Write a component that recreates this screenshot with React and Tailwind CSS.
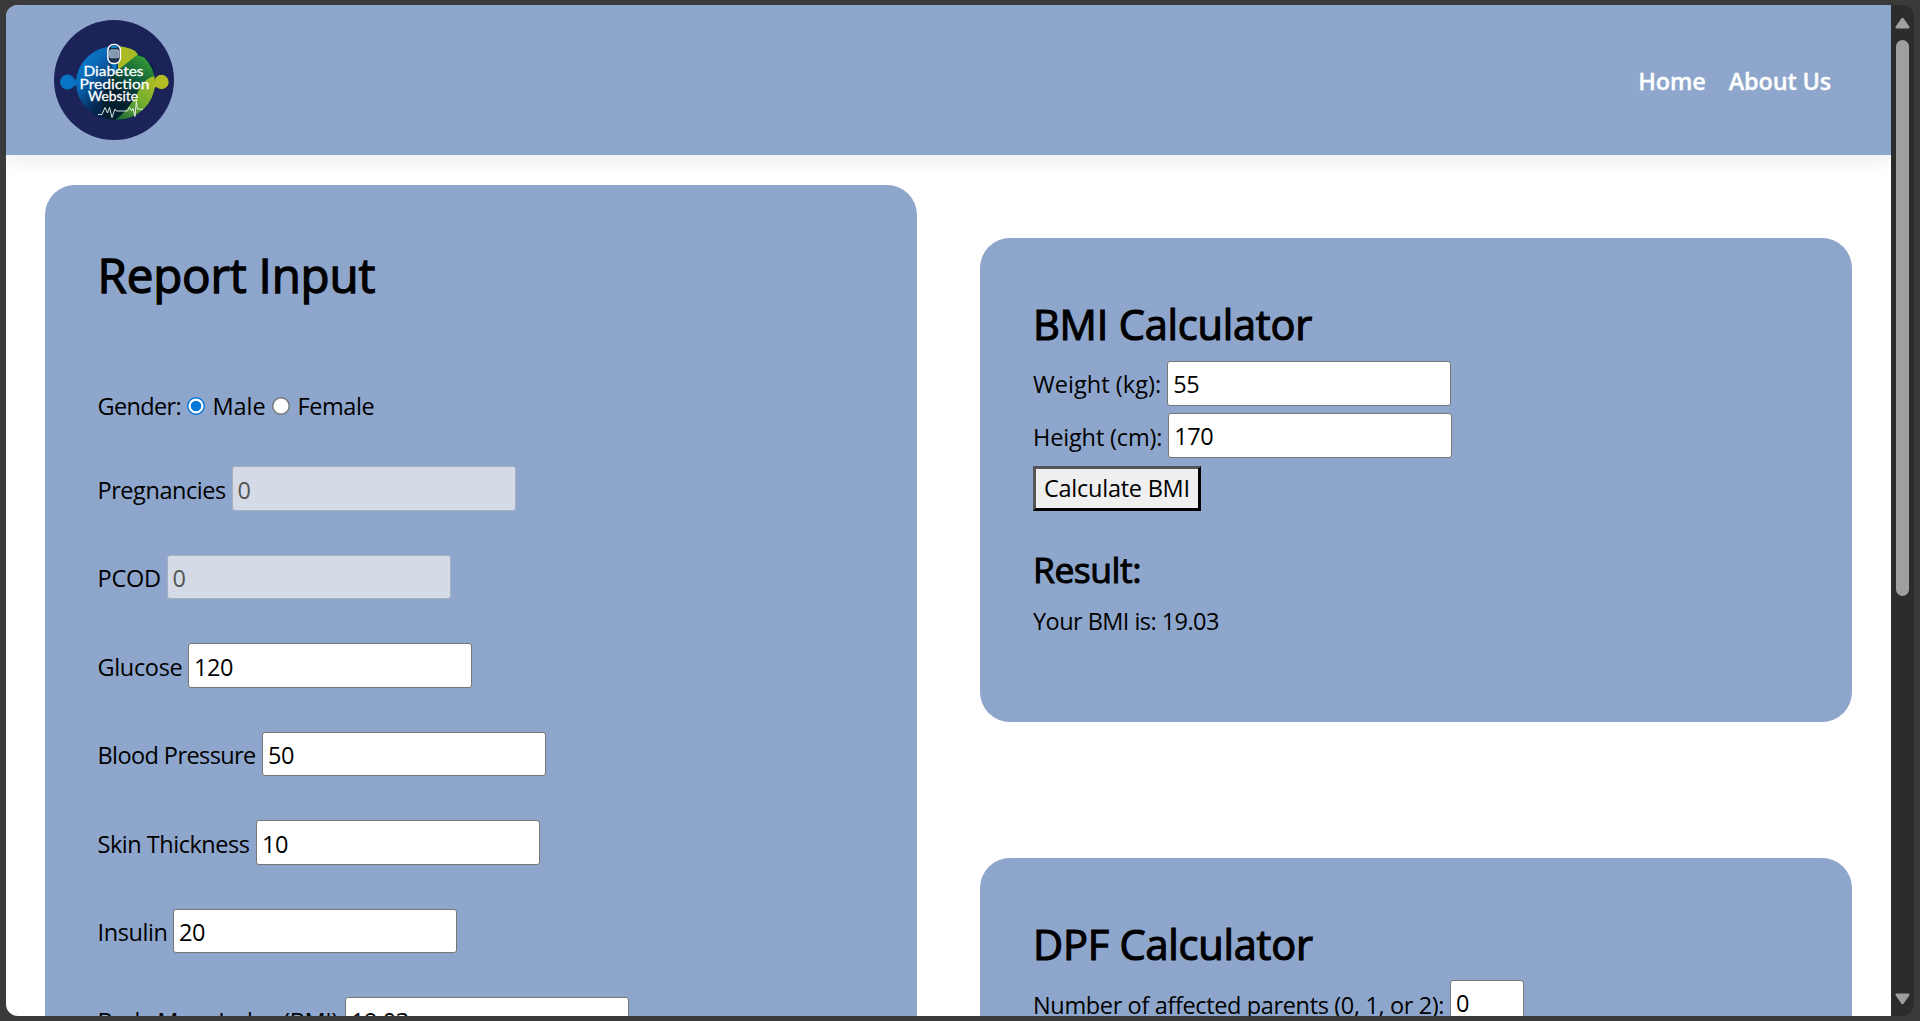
const input =
  "block h-[44.5px] shrink-0 rounded-[3px] border border-[#767676] bg-white pl-[5px] pt-[2px] text-[23.5px] leading-[40px] tracking-[-0.45px] text-black outline-none";
const disabledInput =
  "block h-[44.5px] shrink-0 rounded-[3px] border border-[#a6b0c0] bg-[#d4dbe6] pl-[4.5px] pt-[2px] text-[23.5px] leading-[40px] tracking-[-0.45px] text-[#555555] outline-none";
const label = "block shrink-0 whitespace-nowrap leading-[44px]";

const fields = [
  { name: "Pregnancies", value: "0", disabled: true, cls: "w-[134.5px] pt-[2px] tracking-[-0.446px]" },
  { name: "PCOD", value: "0", disabled: true, cls: "w-[69.5px] pt-[1.2px] tracking-[-0.239px]" },
  { name: "Glucose", value: "120", cls: "w-[90.5px] pt-[2px] tracking-[-0.337px]" },
  { name: "Blood Pressure", value: "50", cls: "w-[164.5px] pt-[1.2px] tracking-[-0.585px]" },
  { name: "Skin Thickness", value: "10", cls: "w-[158.5px] pt-[2px] tracking-[-0.47px]" },
  { name: "Insulin", value: "20", cls: "w-[75.5px] pt-[1.2px] tracking-[-0.4px]" },
  { name: "Body Mass Index (BMI)", value: "19.03", cls: "w-[247.5px] pt-[2px] tracking-[-0.352px]" },
];

function Logo() {
  return (
    <svg width="120" height="120" viewBox="54 20 120 120" className="shrink-0">
      <defs>
        <linearGradient id="blue" x1="0" y1="0" x2="1" y2="0.75">
          <stop offset="0" stopColor="#0b84d6" />
          <stop offset="0.28" stopColor="#0a68b8" />
          <stop offset="0.55" stopColor="#06264f" />
          <stop offset="1" stopColor="#041c30" />
        </linearGradient>
        <linearGradient id="lime" x1="1" y1="0" x2="0" y2="1">
          <stop offset="0" stopColor="#b4c023" />
          <stop offset="0.5" stopColor="#6fad2f" />
          <stop offset="1" stopColor="#0d5b3c" />
        </linearGradient>
        <linearGradient id="green" x1="0.8" y1="0" x2="0.35" y2="0.8">
          <stop offset="0" stopColor="#3fa535" />
          <stop offset="0.45" stopColor="#0c5c3c" />
          <stop offset="0.8" stopColor="#03202f" />
        </linearGradient>
        <clipPath id="body">
          <ellipse cx="115.5" cy="83" rx="39.5" ry="37" />
        </clipPath>
      </defs>
      <circle cx="114" cy="80" r="60" fill="#1c2358" />
      <circle cx="146" cy="70" r="8" fill="#052444" />
      <circle cx="67.5" cy="82" r="7.5" fill="#0a74c4" />
      <path d="M73 78l5 3v3l-5 3z" fill="#0a6fbd" />
      <g clipPath="url(#body)">
        <rect x="76" y="46" width="80" height="75" fill="url(#blue)" />
        <path d="M118 44h13l7 11-20 17z" fill="#a9ba25" />
        <path d="M137 55l-20 16-9 9-6 20 2 22h20l34-36V62z" fill="url(#green)" />
        <path d="M158 76c-10 0-14 5-19 14-6 12-14 23-26 32h48z" fill="url(#lime)" />
      </g>
      <path d="M145 86c6-3 8-4 11-6l3 6-5 2z" fill="#a9ba25" />
      <circle cx="161.5" cy="82" r="7.2" fill="#b1bd22" />
      <path d="M112 64h5l-1 7h-3z" fill="#0b77be" />
      <rect x="107.900" y="44.600" width="12.500" height="19" rx="5.500" fill="#1c3150" stroke="#ffffff" strokeWidth="1.500" />
      <rect x="111" y="45.700" width="6.500" height="2.400" rx="1" fill="#0b84c8" />
      <rect x="109.600" y="49.800" width="9.200" height="8" rx="1.500" fill="#8299b0" stroke="#c9d4de" strokeWidth="0.600" />
      <g fill="#ffffff" stroke="#ffffff" strokeWidth="0.300" fontFamily="Lato, sans-serif" fontWeight="400">
        <text x="83.500" y="76" fontSize="14.300" textLength="60" lengthAdjust="spacingAndGlyphs">Diabetes</text>
        <text x="79.500" y="88.900" fontSize="14.300" textLength="70" lengthAdjust="spacingAndGlyphs">Prediction</text>
        <text x="88" y="101" fontSize="13.300" textLength="50" lengthAdjust="spacingAndGlyphs">Website</text>
      </g>
      <path
        d="M98 114.500h4l3-7 2.500 5.500 2-5.500 2.500 10 3-8.500 1.500 2h11l2-3.800 2 3.800 1.500-2.500 2 8 1.300-15 1.200 7.500 5.500 0.300"
        fill="none" stroke="#f0f5f5" strokeWidth="0.900" strokeLinejoin="round"
      />
    </svg>
  );
}

function Radio({ checked }) {
  return (
    <svg width="18" height="18" viewBox="0 0 18 18" className="mb-[3px] shrink-0" role="radio" aria-checked={checked}>
      <circle cx="9" cy="9" r="8.250" fill="#ffffff" stroke={checked ? "#0078d7" : "#767676"} strokeWidth="1.400" />
      {checked && <circle cx="9" cy="9" r="5.300" fill="#0078d7" />}
    </svg>
  );
}

function Header() {
  return (
    <header className="relative z-10 flex h-[150px] shrink-0 items-center justify-between bg-[#8ea6cb] pl-12 pr-[60px] shadow-[0_6px_18px_rgba(0,0,0,0.08)]">
      <Logo />
      <nav className="flex gap-[23px] pt-[1px] font-semibold leading-8 text-white [-webkit-text-stroke:0.3px_white]">
        <a className="tracking-[-0.141px]">Home</a>
        <a className="tracking-[-0.184px]">About Us</a>
      </nav>
    </header>
  );
}

function ReportCard() {
  return (
    <section className="h-[1000px] w-[872px] shrink-0 rounded-[30px] bg-[#8ea6cb] pl-[52.5px] pt-[55px]">
      <h1 className="text-[47.5px] leading-[70px] tracking-[-0.18px] [-webkit-text-stroke:1.3px_black]">Report Input</h1>
      <div className="mt-[75px] flex h-[44px] items-center">
        <span className="w-[89.500px] whitespace-nowrap tracking-[-0.645px]">Gender:</span>
        <Radio checked />
        <span className="ml-[7.500px] w-[59.500px] tracking-[-0.042px]">Male</span>
        <Radio checked={false} />
        <span className="ml-[7.500px] tracking-[-0.414px]">Female</span>
      </div>
      <div className="mt-[37.3px] flex flex-col gap-[44px]">
        {fields.map((f) => (
          <div key={f.name} className="flex h-[44.5px]">
            <label className={label + " " + f.cls}>{f.name}</label>
            <input className={(f.disabled ? disabledInput : input) + " w-[283.5px]"} defaultValue={f.value} disabled={f.disabled} />
          </div>
        ))}
      </div>
    </section>
  );
}

function BmiCard() {
  return (
    <section className="h-[483.5px] w-[872px] rounded-[30px] bg-[#8ea6cb] pl-[53px] pt-[56px]">
      <h2 className="text-[41.5px] leading-[60px] tracking-[-0.2px] [-webkit-text-stroke:1.2px_black]">BMI Calculator</h2>
      <div className="mt-[7px] flex h-[44.5px]">
        <label className={label + " w-[134.3px] pt-[1px] tracking-[0.05px]"}>Weight (kg):</label>
        <input className={input + " w-[283.5px]"} defaultValue="55" />
      </div>
      <div className="mt-[7.5px] flex h-[44.5px]">
        <label className={label + " w-[135.3px] pt-[1.5px] tracking-[-0.15px]"}>Height (cm):</label>
        <input className={input + " w-[283.5px]"} defaultValue="170" />
      </div>
      <button className="mt-[8.5px] block h-[45px] w-[168px] whitespace-nowrap border-[3px] border-b-black border-l-[#555555] border-r-black border-t-[#555555] bg-[#efefef] pl-[8px] pt-0 text-left leading-[37px] tracking-[-0.245px]">
        Calculate BMI
      </button>
      <h3 className="mt-[33px] text-[35.5px] leading-[50px] tracking-[-0.5px] [-webkit-text-stroke:1px_black]">Result:</h3>
      <p className="mt-[9px] leading-[36px] tracking-[-0.55px]">Your BMI is: 19.03</p>
    </section>
  );
}

function DpfCard() {
  return (
    <section className="h-[483.5px] w-[872px] rounded-[30px] bg-[#8ea6cb] pl-[53px] pt-[56px]">
      <h2 className="text-[41.5px] leading-[60px] tracking-[-0.2px] [-webkit-text-stroke:1.2px_black]">DPF Calculator</h2>
      <div className="mt-[6px] flex h-[44.5px]">
        <label className={label + " w-[417px] pt-[2.5px] tracking-[-0.36px]"}>Number of affected parents (0, 1, or 2):</label>
        <input className={input + " w-[74px]"} defaultValue="0" />
      </div>
    </section>
  );
}

function Scrollbar() {
  return (
    <div className="flex w-[23px] shrink-0 flex-col items-center bg-[#2c2c2c] pb-[11px] pt-[12px]">
      <svg width="15" height="12" viewBox="0 0 15 12" className="shrink-0">
        <path d="M7.500 2L13.300 10.300H1.700z" fill="#9f9f9f" stroke="#9f9f9f" strokeWidth="2.400" strokeLinejoin="round" />
      </svg>
      <div className="mt-[11px] h-[556px] w-[13px] shrink-0 rounded-full bg-[#9f9f9f]" />
      <div className="grow" />
      <svg width="15" height="12" viewBox="0 0 15 12" className="shrink-0">
        <path d="M7.500 10L13.300 1.700H1.700z" fill="#9f9f9f" stroke="#9f9f9f" strokeWidth="2.400" strokeLinejoin="round" />
      </svg>
    </div>
  );
}

export default function App() {
  return (
    <div className="flex h-[1021px] w-[1920px] overflow-hidden bg-[#3a3a3a] px-[6px] py-[5px] font-['Open_Sans',sans-serif] text-[23.5px] text-black">
      <div className="flex grow overflow-hidden rounded-xl">
        <div className="flex w-[1885px] shrink-0 flex-col overflow-hidden bg-white">
          <Header />
          <main className="flex pl-[39px] pt-[30px]">
            <ReportCard />
            <div className="ml-[63px] mt-[53px] flex flex-col gap-[136.5px]">
              <BmiCard />
              <DpfCard />
            </div>
          </main>
        </div>
        <Scrollbar />
      </div>
    </div>
  );
}
